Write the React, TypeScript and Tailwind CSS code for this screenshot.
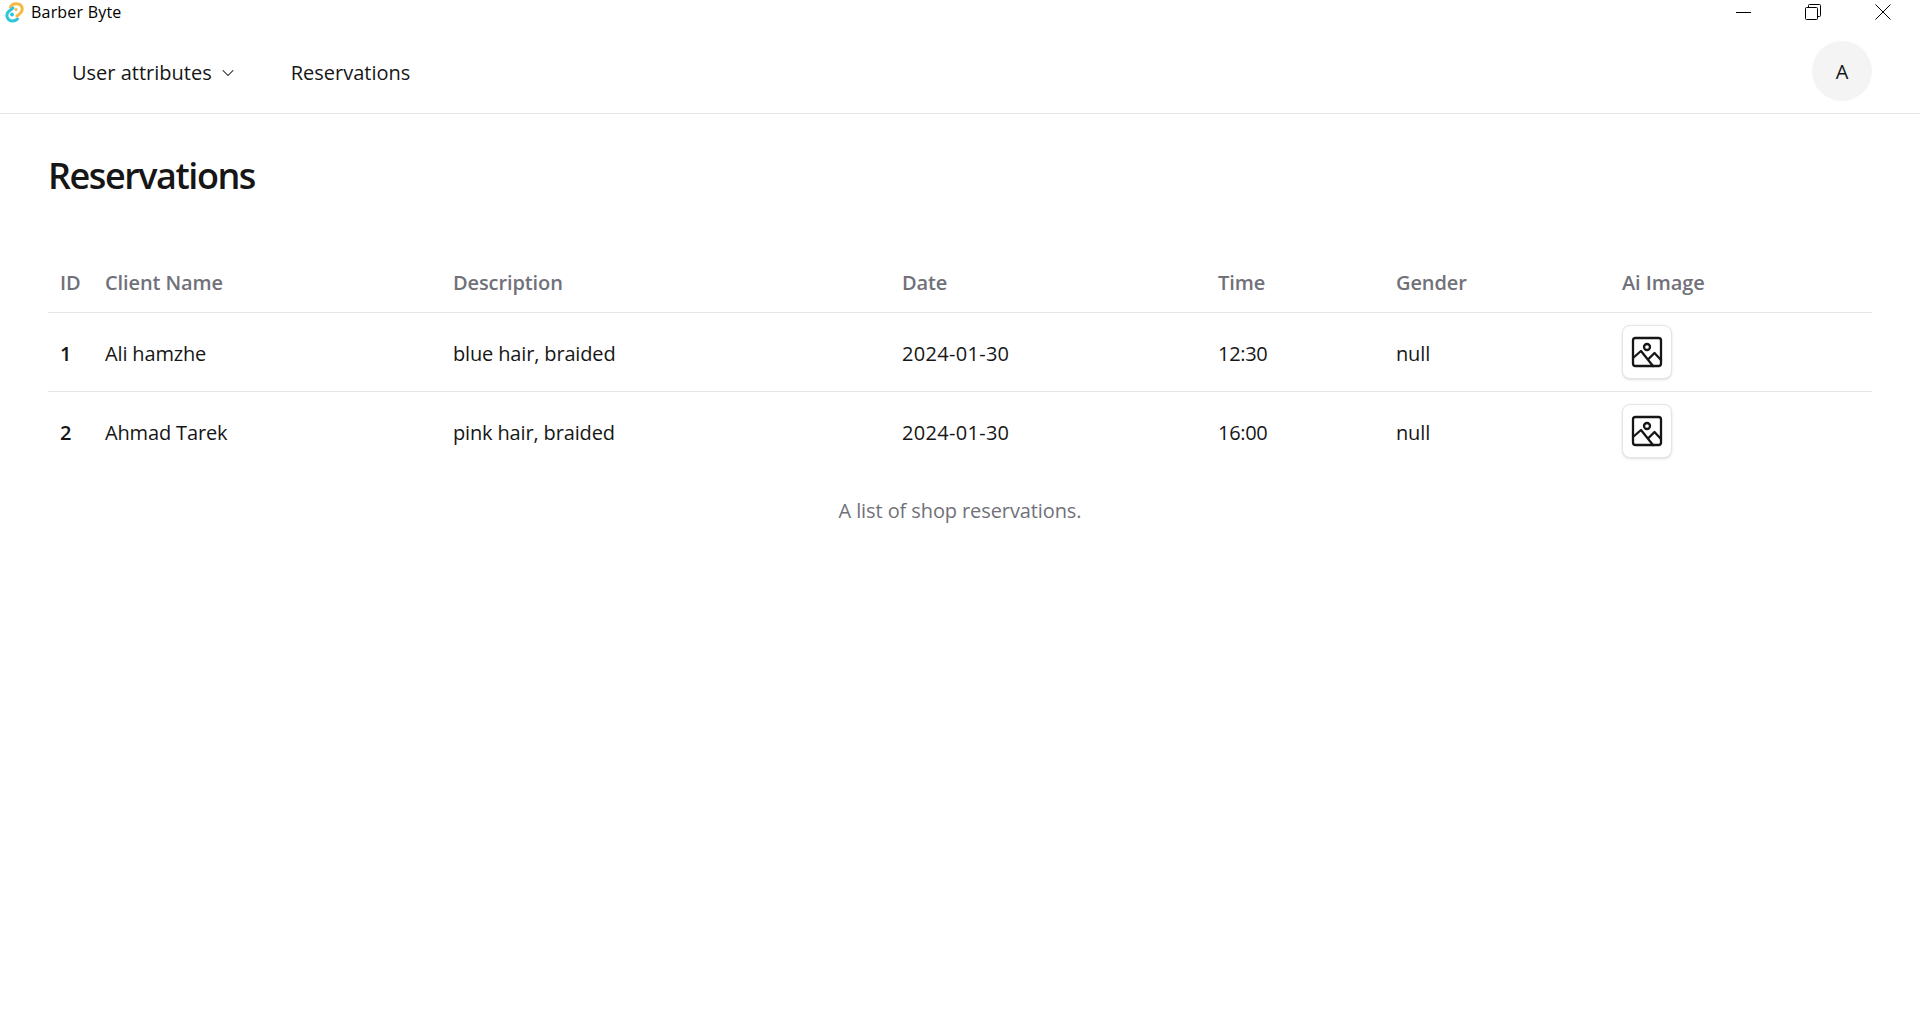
import { ChevronDown } from 'lucide-react'

const rows = [
  { id: 1, name: 'Ali hamzhe', description: 'blue hair, braided', date: '2024-01-30', time: '12:30', gender: 'null' },
  { id: 2, name: 'Ahmad Tarek', description: 'pink hair, braided', date: '2024-01-30', time: '16:00', gender: 'null' },
]

const headers = ['ID', 'Client Name', 'Description', 'Date', 'Time', 'Gender', 'Ai Image']

function Logo() {
  return (
    <svg width="20" height="22" viewBox="0 0 20 22" fill="none" strokeWidth="3" strokeLinecap="round">
      <path d="M6.5 6 A6 5 0 0 1 18 6.5 C19 10 16 13 13 15" stroke="#f5b942" />
      <path d="M9 7 L4.5 10.5 C1.5 14 3 19.5 8 20 C10 20.2 12 19.3 13.5 18" stroke="#2ec5dc" />
      <circle cx="8" cy="13.5" r="2" fill="#2ec5dc" />
      <circle cx="12" cy="8.5" r="1.5" fill="#f5b942" />
    </svg>
  )
}

function ImageIcon() {
  return (
    <svg width="32" height="32" viewBox="0 0 32 32" fill="none" stroke="#161616" strokeWidth="2.3" strokeLinejoin="round" strokeLinecap="round">
      <rect x="2" y="2" width="28" height="28" rx="2.5" />
      <circle cx="16" cy="11" r="3" />
      <path d="M2 22 L10 15 L22 30" />
      <path d="M17.5 23 L23.5 17 L30 24" />
    </svg>
  )
}

export default function App() {
  return (
    <div className="min-h-screen bg-white text-[#161616] font-['Open_Sans',sans-serif]">
      {/* Title bar */}
      <div className="h-[28px] pb-[4px] flex items-center justify-between">
        <div className="flex items-center pl-[4px] gap-[7px]">
          <Logo />
          <span className="text-[16px] text-black tracking-[0.2px]">Barber Byte</span>
        </div>
        <div className="flex items-center h-full pr-[29px] gap-[54px]">
          <div className="w-[15px] h-px bg-black" />
          <svg width="16" height="16" viewBox="0 0 16 16" fill="none" stroke="#000">
            <rect x="0.5" y="3.5" width="12" height="12" rx="1" />
            <path d="M3.5 3.5 V1.5 a1 1 0 0 1 1-1 H14.5 a1 1 0 0 1 1 1 V11.5 a1 1 0 0 1-1 1 H12.5" />
          </svg>
          <svg width="16" height="16" viewBox="0 0 16 16" fill="none" stroke="#000">
            <path d="M0.5 0.5 L15.5 15.5 M15.5 0.5 L0.5 15.5" />
          </svg>
        </div>
      </div>

      {/* Nav */}
      <nav className="h-[86px] border-b border-[#e5e5e5] flex items-center justify-between pl-[72px] pr-[48px]">
        <div className="flex items-center gap-[53px] text-[20px] pt-[4px]">
          <div className="flex items-center gap-[6px]">
            <span>User attributes</span>
            <ChevronDown className="w-[20px] h-[20px]" strokeWidth={1.25} />
          </div>
          <span>Reservations</span>
        </div>
        <div className="w-[60px] h-[60px] pt-[2px] rounded-full bg-[#f4f4f5] flex items-center justify-center text-[20px]">A</div>
      </nav>

      {/* Content */}
      <main className="px-[48px]">
        <h1 className="text-[36px] font-[550] leading-[48px] mt-[38px] tracking-[-1.45px]">Reservations</h1>
        <table className="w-full mt-[54px] table-fixed text-[20px] tracking-[-0.15px]">
          <colgroup>
            <col className="w-[45px]" />
            <col className="w-[348px]" />
            <col className="w-[449px]" />
            <col className="w-[316px]" />
            <col className="w-[178px]" />
            <col className="w-[226px]" />
            <col />
          </colgroup>
          <thead>
            <tr className="h-[58px] border-b border-[#e5e5e5]">
              {headers.map(h => (
                <th key={h} className="px-[12px] pt-[1px] text-left font-[550] tracking-[-0.1px] text-[#71717a]">{h}</th>
              ))}
            </tr>
          </thead>
          <tbody>
            {rows.map((r, i) => (
              <tr key={r.id} className={i === 0 ? 'h-[79px] border-b border-[#e5e5e5]' : 'h-[79px]'}>
                <td className="px-[12px] pt-[4px] font-[550]">{r.id}</td>
                <td className="px-[12px] pt-[4px]">{r.name}</td>
                <td className="px-[12px] pt-[4px]">{r.description}</td>
                <td className="px-[12px] pt-[4px] tracking-[0.3px]">{r.date}</td>
                <td className="px-[12px] pt-[4px] tracking-[-0.3px]">{r.time}</td>
                <td className="px-[12px] pt-[4px]">{r.gender}</td>
                <td className="px-[12px]">
                  <button className="w-[50px] h-[54px] rounded-lg border border-[#e5e5e5] flex items-center justify-center shadow-sm bg-white">
                    <ImageIcon />
                  </button>
                </td>
              </tr>
            ))}
          </tbody>
        </table>
        <p className="text-center text-[20px] text-[#71717a] mt-[26px] tracking-[-0.1px]">A list of shop reservations.</p>
      </main>
    </div>
  )
}
